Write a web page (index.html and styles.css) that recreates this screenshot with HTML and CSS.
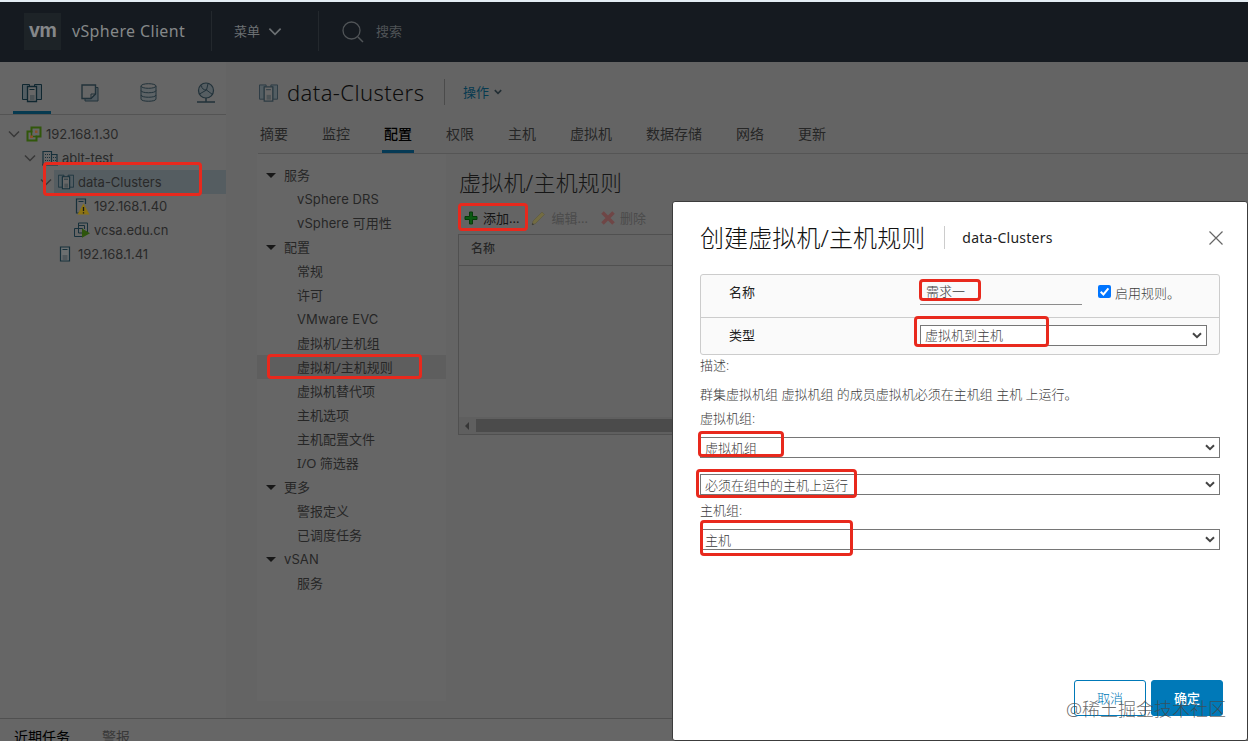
FILE: index.html
```html
<!DOCTYPE html>
<html lang="zh-CN">
<head>
  <meta charset="UTF-8">
  <title>vSphere Client</title>
  <link rel="stylesheet" href="styles.css">
</head>
<body>
  <svg class="defs" width="0" height="0">
    <symbol id="cluster" viewBox="0 0 20 20">
      <path d="M.5 1.500h7v2h-2v13h-5zM19.500 1.500h-7v2h2v13h5z" fill="#535d62" stroke="currentColor"/>
      <path d="M5.500 3.500h9v15h-9z" fill="#676767" stroke="currentColor" stroke-width="1.300"/>
      <path d="M7.500 6.500h5" stroke="currentColor"/>
      <path d="M8 12h4.500v5H8z" fill="#4c5356"/>
    </symbol>
    <symbol id="host" viewBox="0 0 12 16">
      <path d="M1.500 1h9v14h-9z" fill="#6b6f70" stroke="currentColor" stroke-width="1.200"/>
      <path d="M3.500 3.500h5" stroke="currentColor"/>
      <path d="M3.500 9h5v5h-5z" fill="#50585c"/>
    </symbol>
    <symbol id="chevron" viewBox="0 0 12 8">
      <path d="M1 1.500l5 5 5-5" fill="none" stroke="currentColor" stroke-width="1.500"/>
    </symbol>
    <symbol id="chevron-bold" viewBox="0 0 10 7">
      <path d="M1 1.200l4 4 4-4" fill="none" stroke="currentColor" stroke-width="2"/>
    </symbol>
  </svg>

  <header class="header">
    <div class="logo">vm</div>
    <div class="brand">vSphere Client</div>
    <div class="menu">菜单 <svg width="14" height="9"><use href="#chevron"/></svg></div>
    <div class="search">
      <svg width="22" height="22" viewBox="0 0 22 22"><circle cx="9.500" cy="9.500" r="8.500" fill="none" stroke="currentColor" stroke-width="1.300"/><path d="M16 16l5 5" stroke="currentColor" stroke-width="1.500"/></svg>
      搜索
    </div>
  </header>

  <div class="workspace">
    <aside class="sidebar">
      <div class="views">
        <div class="view active"><svg width="20" height="20"><use href="#cluster"/></svg></div>
        <div class="view"><svg width="18" height="18" viewBox="0 0 18 18"><path d="M14.500 3.500h2.500v13.500h-13v-2.500h6l4.500-4.500z" fill="#505a60" stroke="currentColor"/><path d="M1 1h13.500v9l-4.500 4.500H1z" fill="#666" stroke="currentColor" stroke-width="1.400"/><path d="M14.500 10H10v4.500" fill="none" stroke="currentColor"/></svg></div>
        <div class="view"><svg width="17" height="19" viewBox="0 0 17 19"><path d="M1 3v13c0 3 15 3 15 0V3" fill="#5d6366" stroke="currentColor"/><ellipse cx="8.500" cy="3" rx="7.500" ry="2.300" fill="#666" stroke="currentColor"/><path d="M1 7.500c0 3 15 3 15 0M1 12c0 3 15 3 15 0" fill="none" stroke="currentColor"/></svg></div>
        <div class="view"><svg width="18" height="22" viewBox="0 0 18 22"><circle cx="9" cy="8.500" r="7.500" fill="#565e62" stroke="currentColor" stroke-width="1.200"/><path d="M11 1.800L9.500 8 2.500 12M9.500 8l6 4.500M4.500 3.500c0 3 2 4.500 5 4.500" fill="none" stroke="currentColor"/><path d="M9 16v4M0 20h18" stroke="currentColor" stroke-width="1.500"/></svg></div>
      </div>
      <div class="tree">
        <div class="node level0"><svg class="arrow" width="12" height="8"><use href="#chevron"/></svg><svg class="icon" width="16" height="16" viewBox="0 0 16 16"><path d="M1.500 5.500h4v-4h9v9h-4v4h-9z" fill="none" stroke="#31570a" stroke-width="2"/><path d="M5.500 5v5.500H11" fill="none" stroke="#31570a" stroke-width="1.500"/><path d="M4 9.500h3v2.500H4zM9 4.500h2.500v2.500H9z" fill="#87502a"/></svg>192.168.1.30</div>
        <div class="node level1"><svg class="arrow" width="12" height="8"><use href="#chevron"/></svg><svg class="icon" width="16" height="16" viewBox="0 0 16 16"><path d="M1 1.500h8.500V15H1zM9.500 4.500H15V15H9.500M0 15h16" fill="none" stroke="currentColor" stroke-width="1.200"/><path d="M3 4.500h5M3 7.500h5M3 10.500h5M3 13h5M11 7.500h3M11 10.500h3" stroke="currentColor" stroke-dasharray="1 1"/></svg>ablt-test</div>
        <div class="node level2 selected"><svg class="arrow" width="12" height="8"><use href="#chevron"/></svg><svg class="icon" width="16" height="16"><use href="#cluster"/></svg>data-Clusters</div>
        <div class="node level3"><svg class="icon" width="16" height="17" viewBox="0 0 16 17"><path d="M5 15H2.500V1h9v5M4.500 3.500h5" fill="none" stroke="currentColor" stroke-width="1.200"/><path d="M9.500 5.500l6 11h-12z" fill="#8c7313"/><path d="M9.500 9v4M9.500 14.200v1.300" stroke="#171717" stroke-width="1.300"/></svg>192.168.1.40</div>
        <div class="node level3"><svg class="icon" width="16" height="16" viewBox="0 0 16 16"><path d="M4.500 4V1h9v9h-2M.5 6.500h8v8h-8zM4.500 6V3.500h6V7M8 11H4.500V7" fill="none" stroke="currentColor"/><path d="M8 6.500l8 4.700-8 4.600z" fill="#2e550c"/></svg>vcsa.edu.cn</div>
        <div class="node level2 leaf"><svg class="icon" width="12" height="16"><use href="#host"/></svg>192.168.1.41</div>
      </div>
    </aside>

    <main class="main">
      <div class="object-title">
        <svg width="19" height="20"><use href="#cluster"/></svg>
        <h1>data-Clusters</h1>
        <div class="actions">操作 <svg width="8" height="6"><use href="#chevron-bold"/></svg></div>
      </div>
      <nav class="tabs">
        <span>摘要</span><span>监控</span><span class="active">配置</span><span>权限</span><span>主机</span><span>虚拟机</span><span>数据存储</span><span>网络</span><span>更新</span>
      </nav>
      <div class="config">
        <div class="toc">
          <div class="group">服务</div>
          <div class="item latin">vSphere DRS</div>
          <div class="item latin">vSphere 可用性</div>
          <div class="group">配置</div>
          <div class="item">常规</div>
          <div class="item">许可</div>
          <div class="item latin">VMware EVC</div>
          <div class="item">虚拟机/主机组</div>
          <div class="item selected">虚拟机/主机规则</div>
          <div class="item">虚拟机替代项</div>
          <div class="item">主机选项</div>
          <div class="item">主机配置文件</div>
          <div class="item">I/O 筛选器</div>
          <div class="group">更多</div>
          <div class="item">警报定义</div>
          <div class="item">已调度任务</div>
          <div class="group latin">vSAN</div>
          <div class="item">服务</div>
        </div>
        <section class="rules">
          <h2>虚拟机/主机规则</h2>
          <div class="toolbar">
            <span class="tool add"><svg width="14" height="14" viewBox="0 0 14 14"><path d="M5.500 1h3v4.500H13v3H8.500V13h-3V8.500H1v-3h4.500z" fill="#0b5a12" stroke="#063b0a"/></svg>添加...</span>
            <span class="tool edit"><svg width="15" height="15" viewBox="0 0 15 15"><path d="M1 14l1-4 9-9 2.500 2.500-9 9z" fill="#736c42" stroke="#5b573f" stroke-width=".6"/><path d="M1 14l.5-2 1.500 1.500z" fill="#333"/></svg>编辑...</span>
            <span class="tool delete"><svg width="14" height="14" viewBox="0 0 14 14"><path d="M1.500 1.500l11 11M12.500 1.500l-11 11" stroke="#6f4646" stroke-width="3.500"/></svg>删除</span>
          </div>
          <div class="grid">
            <div class="grid-head">名称</div>
            <div class="grid-body"></div>
            <div class="scrollbar"><i></i><b></b></div>
          </div>
        </section>
      </div>
    </main>
  </div>

  <footer class="footer"><span class="active">近期任务</span><span>警报</span></footer>

  <div class="dialog">
    <div class="dialog-head">
      <h3>创建虚拟机/主机规则</h3>
      <span class="target">data-Clusters</span>
      <svg class="close" width="14" height="14" viewBox="0 0 14 14"><path d="M.5.5l13 13M13.500.5l-13 13" stroke="#666" stroke-width="1.200"/></svg>
    </div>
    <div class="form">
      <div class="form-row name-row">
        <span class="label">名称</span>
        <span class="text-input">需求一</span>
        <span class="check"><svg width="13" height="13" viewBox="0 0 13 13"><rect width="13" height="13" rx="2" fill="#0075ff"/><path d="M2.700 6.700l2.700 2.700 5-6" fill="none" stroke="#fff" stroke-width="2"/></svg>启用规则。</span>
      </div>
      <div class="form-row">
        <span class="label">类型</span>
        <div class="select"><span>虚拟机到主机</span><svg width="10" height="7"><use href="#chevron-bold"/></svg></div>
      </div>
    </div>
    <p class="caption">描述:</p>
    <p class="description">群集虚拟机组 虚拟机组 的成员虚拟机必须在主机组 主机 上运行。</p>
    <p class="caption">虚拟机组:</p>
    <div class="select vm-group"><span>虚拟机组</span><svg width="10" height="7"><use href="#chevron-bold"/></svg></div>
    <div class="select rule"><span>必须在组中的主机上运行</span><svg width="10" height="7"><use href="#chevron-bold"/></svg></div>
    <p class="caption">主机组:</p>
    <div class="select host-group"><span>主机</span><svg width="10" height="7"><use href="#chevron-bold"/></svg></div>
    <div class="buttons">
      <div class="btn">取消</div>
      <div class="btn primary">确定</div>
    </div>
  </div>

  <!-- step highlights -->
  <div class="mark mark-cluster"></div>
  <div class="mark mark-toc"></div>
  <div class="mark mark-add"></div>
  <div class="mark mark-name"></div>
  <div class="mark mark-type"></div>
  <div class="mark mark-vm"></div>
  <div class="mark mark-must"></div>
  <div class="mark mark-host"></div>
  <div class="watermark">@稀土掘金技术社区</div>
</body>
</html>
```
FILE: styles.css
```css
* { box-sizing: border-box; }
body {
  margin: 0;
  height: 741px;
  overflow: hidden;
  position: relative;
  display: flex;
  flex-direction: column;
  border-top: 2px solid #e3edf3;
  background: #646464;
  color: #262626;
  font-family: "Noto Sans", "Noto Sans CJK SC", sans-serif;
  font-size: 13px;
  line-height: 24px;
}
h1, h2, h3, p { margin: 0; font-weight: 300; }
svg { display: block; flex: none; }
.defs { position: absolute; }

/* header */
.header {
  height: 60px;
  flex: none;
  display: flex;
  align-items: center;
  padding-bottom: 2px;
  background: #151a20;
  color: #6c7073;
}
.logo {
  width: 37px;
  height: 37px;
  margin-left: 24px;
  background: #1d2327;
  color: #858789;
  font: bold 19px/35px Inter, sans-serif;
  letter-spacing: -0.5px;
  text-align: center;
}
.brand {
  width: 150px;
  padding-left: 11px;
  font-size: 16px;
  letter-spacing: 0.35px;
  color: #858889;
  white-space: nowrap;
}
.menu, .search {
  height: 40px;
  display: flex;
  align-items: center;
  border-left: 1px solid #23282d;
}
.menu { width: 107px; padding-left: 22px; gap: 8px; }
.search { padding-left: 23px; gap: 12px; color: #505457; }
.search svg { margin-top: 2px; }

/* left inventory */
.workspace { flex: 1; display: flex; min-height: 0; }
.sidebar { width: 226px; background: #666; flex: none; }
.views {
  height: 53px;
  display: flex;
  padding: 0 0 0 13px;
  gap: 20px;
  border-bottom: 1px solid #545454;
}
.view {
  width: 38px;
  height: 52px;
  padding-top: 9px;
  display: flex;
  align-items: center;
  justify-content: center;
  color: #22323a;
}
.view.active { border-bottom: 3px solid #063a50; padding-top: 12px; color: #102730; }
.tree { padding-top: 7px; font-family: Inter, sans-serif; color: #292929; }
.node { height: 24px; display: flex; align-items: center; }
.arrow { color: #383838; margin-right: 6px; }
.icon { margin-right: 4px; color: #17303b; }
.level0 { padding-left: 8px; }
.level1 { padding-left: 24px; }
.level2 { padding-left: 40px; }
.level3 { padding-left: 74px; }
.leaf { padding-left: 59px; }
.leaf .icon { margin-right: 7px; }
.selected.node { background: linear-gradient(#555d61, #555d61) no-repeat 54px 0; }

/* object pane */
.main { flex: 1; padding-left: 34px; }
.object-title { height: 60px; display: flex; align-items: center; }
.object-title > svg { color: #2c3b43; margin: 2px 9px 0 -1px; }
h1 { font-size: 22px; color: #0c0c0c; width: 157px; letter-spacing: 0.4px; white-space: nowrap; }
.actions {
  height: 26px;
  padding-left: 18px;
  border-left: 1px solid #4b4b4b;
  display: flex;
  align-items: center;
  gap: 5px;
  color: #063a50;
}
.actions svg { color: #222e34; }
.tabs {
  height: 32px;
  display: flex;
  gap: 30px;
  border-bottom: 1px solid #555;
  font-size: 14px;
  margin-left: -2px;
}
.tabs span { height: 31px; padding: 0 2px; }
.tabs .active { border-bottom: 3px solid #063a55; color: #000; font-weight: 500; }
.config { display: flex; }
.toc { width: 189px; height: 547px; margin-left: -3px; padding-top: 9px; background: #666; flex: none; }
.group { display: flex; align-items: center; padding-left: 9px; }
.group::before {
  content: "";
  border: 5px solid transparent;
  border-top-color: #171717;
  border-bottom: 0;
  margin-right: 8px;
}
.item { padding-left: 40px; }
.latin { font-family: Inter, "Noto Sans CJK SC", sans-serif; letter-spacing: 0.1px; }
.item.selected { background: #5e5e5e; }
.rules { flex: 1; margin-left: 12px; padding-top: 12px; }
h2 { font-size: 22px; line-height: 33px; padding-left: 1px; letter-spacing: 0.2px; color: #161616; }
.toolbar { display: flex; height: 35px; align-items: center; padding: 3px 0 0 6px; }
.tool { display: flex; align-items: center; gap: 5px; color: #151515; }
.edit, .delete { color: #4b4b4b; }
.edit { margin-left: 12px; }
.delete { margin-left: 13px; }
.grid { border: 1px solid #505050; height: 201px; display: flex; flex-direction: column; }
.grid-head { height: 31px; border-bottom: 1px solid #505050; padding: 2px 12px; font-size: 12px; font-weight: 500; }
.grid-body { flex: 1; }
.scrollbar { height: 17px; display: flex; align-items: center; background: #5f5f5f; }
.scrollbar i { margin: 0 6px; border: 4px solid transparent; border-left: 0; border-right-color: #363636; }
.scrollbar b { height: 13px; flex: 1; background: #4b4b4b; margin-left: 1px; }

.footer {
  height: 23px;
  flex: none;
  border-top: 1px solid #505050;
  background: #666;
  display: flex;
  gap: 32px;
  padding: 6px 14px 0;
  font-size: 14px;
}
.footer .active { color: #000; }
.footer span:last-child { color: #383838; }

/* create rule dialog */
.dialog {
  position: absolute;
  left: 672px;
  top: 199px;
  width: 576px;
  height: 540px;
  padding: 20px 27px;
  display: flex;
  flex-direction: column;
  border: 1px solid #3c3c3c;
  border-radius: 3px;
  background: #fff;
  color: #3c3c3c;
  font-weight: 300;
}
.dialog-head { height: 52px; padding-top: 4px; display: flex; align-items: flex-start; }
h3 { font-size: 24px; color: #111; letter-spacing: 0.1px; }
.target {
  margin-left: 19px;
  padding-left: 17px;
  height: 23px;
  border-left: 1px solid #ccc;
  font-size: 14px;
  letter-spacing: 0.25px;
  font-weight: 400;
  color: #222;
}
.close { margin: 5px -3px 0 auto; }
.form { border: 1px solid #ccc; border-radius: 3px; background: #fafafa; flex: none; }
.form-row { height: 36px; display: flex; align-items: center; padding: 0 12px 2px 28px; }
.name-row { height: 43px; align-items: flex-start; border-bottom: 1px solid #ccc; padding-top: 5px; }
.label { width: 191px; color: #222; font-weight: 400; }
.text-input { width: 162px; height: 25px; padding-left: 6px; line-height: 22px; border-bottom: 1px solid #8c8c8c; }
.check { display: flex; align-items: center; margin: 1px 0 0 16px; gap: 4px; }
.check svg { margin-top: -3px; }
.select {
  height: 21px;
  flex: none;
  display: flex;
  align-items: center;
  justify-content: space-between;
  padding: 0 4px;
  border: 1px solid #767676;
  background: #fff;
  line-height: 18px;
}
.select svg { color: #444; }
.form-row .select { flex: 1; }
.caption { flex: none; }
.form + .caption { margin-top: -2px; }
.description { padding: 5px 0 0; }
.vm-group { margin-top: 7px; }
.rule { margin: 16px 0 3px; }
.host-group { margin-top: 7px; }
.buttons { display: flex; justify-content: flex-end; gap: 5px; margin: auto -3px 4px 0; }
.btn {
  width: 72px;
  height: 36px;
  border: 1px solid #0079b8;
  border-radius: 3px;
  line-height: 35px;
  text-align: center;
  color: #0079b8;
}
.primary { background: #0079b8; color: #fff; font-weight: 500; }

/* annotations over the page */
.mark { position: absolute; border: 3px solid #e8291d; border-radius: 4px; }
.mark-cluster { left: 43px; top: 160px; width: 159px; height: 34px; }
.mark-toc { left: 267px; top: 352px; width: 155px; height: 25px; }
.mark-add { left: 458px; top: 201px; width: 70px; height: 28px; }
.mark-name { left: 919px; top: 277px; width: 62px; height: 22px; }
.mark-type { left: 914px; top: 314px; width: 135px; height: 31px; }
.mark-vm { left: 698px; top: 429px; width: 86px; height: 26px; }
.mark-must { left: 696px; top: 467px; width: 161px; height: 29px; }
.mark-host { left: 700px; top: 518px; width: 153px; height: 36px; }
.watermark {
  position: absolute;
  left: 1066px;
  top: 695px;
  font-size: 18px;
  font-weight: 300;
  color: rgba(70, 70, 70, 0.8);
  white-space: nowrap;
}
```
